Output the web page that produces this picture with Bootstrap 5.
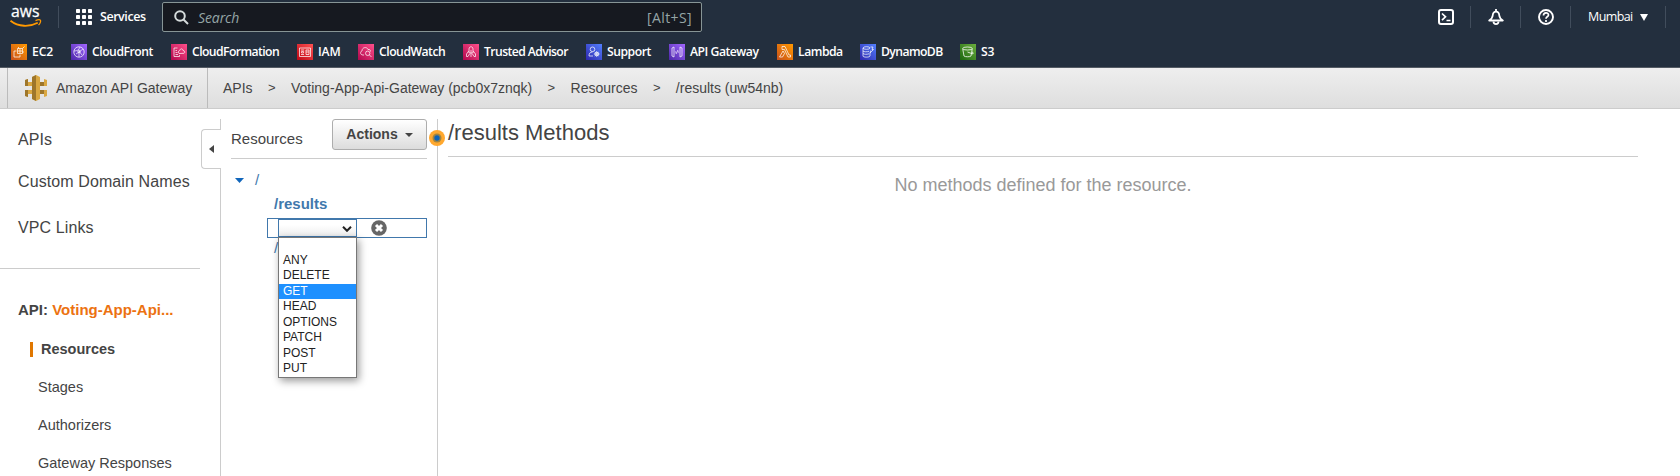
<!DOCTYPE html>
<html lang="en">
<head>
<meta charset="utf-8">
<title>API Gateway</title>
<link href="https://cdn.jsdelivr.net/npm/bootstrap@5.3.0/dist/css/bootstrap.min.css" rel="stylesheet">
<script src="https://cdn.jsdelivr.net/npm/bootstrap@5.3.0/dist/js/bootstrap.bundle.min.js"></script>
<style>
body{font-family:"Liberation Sans",Arial,sans-serif;color:#444;background:#fff;height:476px;overflow:hidden;font-size:14px}
a{color:inherit;text-decoration:none}
svg{display:block;flex:none}
.awsnav{background:#232f3e;height:68px;border-bottom:1px solid #545b64;font-family:"Open Sans","Noto Sans",sans-serif;color:#fff}
.toprow{height:34px}
.vsep{width:1px;height:22px;background:#414d5c;flex:none}
.logo{width:30px;height:28px;margin-left:10px}
.logosep{margin-left:18px}
.services{font-weight:600;font-size:12.5px;width:45px;margin-left:8px;letter-spacing:-.45px}
.searchbox{width:540px;height:30px;background:#161920;border:1px solid #879596;border-radius:2px;color:#95a5a6;margin-left:17px;padding:0 9px 0 11px;font-size:14px}
.searchbox i{margin-left:9px;letter-spacing:-.1px}
.searchbox span{letter-spacing:.4px}
.tools{margin-right:14px}
.tools>svg{margin:0 16px 0 17px}
.region{font-size:12.500px;letter-spacing:-.6px;font-weight:500;padding-left:17px;width:94px}
.region svg{margin-left:7px}
.favs{height:33px;padding:1px 0 0 11px}
.favs a{display:flex;align-items:center;flex:none;font-weight:600;font-size:12.200px;letter-spacing:-.48px;white-space:nowrap;line-height:16px;padding-top:1px}
.favs svg{margin-right:5px}
.favs a:nth-child(1){width:60px}.favs a:nth-child(2){width:100px}.favs a:nth-child(3){width:126px}
.favs a:nth-child(4){width:61px}.favs a:nth-child(5){width:105px}.favs a:nth-child(6){width:123px}
.favs a:nth-child(7){width:83px}.favs a:nth-child(8){width:108px}.favs a:nth-child(9){width:83px}.favs a:nth-child(10){width:100px}
.favs a:nth-child(1),.favs a:nth-child(4),.favs a:nth-child(11){letter-spacing:-.1px}
.favs a:nth-child(3),.favs a:nth-child(6),.favs a:nth-child(10){letter-spacing:-.58px}
.crumbs{height:41px;background:linear-gradient(#eee,#dedede);border-bottom:1px solid #ccc;padding-left:7px}
.brandcell{width:201px;border-left:1px solid #bbb;border-right:1px solid #bbb;padding-left:16px;height:40px}
.brandcell span{margin-left:8px}
.crumbtrail{padding-left:15px}
.crumbtrail b{font-weight:400;font-size:13px;margin:0 15.400px}
.workarea{height:367px}
.sidepane{width:221px;margin-top:10px;border-right:1px solid #ccc;height:357px;position:relative}
.toplinks{padding-top:11px}
.toplinks a{display:block;font-size:16px;line-height:20px;padding-left:18px;margin-bottom:22px;letter-spacing:.1px}
.toplinks a+a{margin-bottom:26px}
.toplinks a:last-child{margin-bottom:30px}
.sidehr{border-bottom:1px solid #ccc;width:200px;margin-bottom:31px}
.collapser{position:absolute;left:201px;top:10px;width:20px;height:40px;background:#fff;border:1px solid #ccc;border-right:0;border-radius:4px 0 0 4px;padding-left:7px}
.subnav{margin-top:19px}
.subnav a{display:block;font-size:14.5px;line-height:20px;height:38px;padding-left:38px}
.subnav a.current{font-weight:700;padding-left:30px}
.current::before{content:"";display:inline-block;width:3px;height:15px;background:#e07700;margin-right:8px;vertical-align:-3px}
.apiname{font-weight:700;font-size:15px;line-height:20px;padding-left:18px}
.orange{color:#ec7211}
.treepane{width:217px;margin-top:10px;border-right:1px solid #ccc;height:357px;padding:0 10px;position:relative}
.treehead{height:40px;border-bottom:1px solid #ccc;font-size:15px}
.treehead span{padding-top:9px}
.actbtn{width:95px;height:31px;border:1px solid #adadad;border-radius:3px;background:linear-gradient(#fff,#dcdcdc);font-weight:700;font-size:14px;line-height:20px;color:#444;padding:0 0 1px}
.actbtn svg{margin:1px 0 0 7px}
.grip{position:absolute;left:208.300px;top:11.300px;z-index:2}
.blue{color:#4178ac}
.treerow{font-size:15px;line-height:24px;height:24px}
.rootrow{margin-top:9px;padding-left:4px}
.rootrow span{margin-left:11px}
.indent{padding-left:43px}
.lastrow{line-height:19px}
.methodrow{width:160px;height:20px;border:1px solid #4178ac;margin:2px 0 0 36px;padding-left:10px}
.fakeselect{width:79px;height:18px;border:1px solid #4178ac;position:relative;background:linear-gradient(#fff 30%,#eee)}
.chev{margin:6px 0 0 63px}
.optlist{position:absolute;left:-1px;top:17px;width:79px;height:141px;background:#fff;border:1px solid #777;box-shadow:2px 3px 8px rgba(0,0,0,.4);color:#222;font-size:12px;line-height:15.43px;padding:15px 0 0;z-index:3;margin:0;list-style:none}
.optlist li{padding-left:4px;height:15.43px}
.optlist li.hit{background:#1e90ff;color:#fff}
.clearico{margin:.5px 0 0 14px}
.mainpane{padding:10px 42px 0 10px}
.mainpane h1{font-size:22px;line-height:28px;height:38px;border-bottom:1px solid #ccc;margin:0;font-weight:400}
.mainpane p{font-size:18px;line-height:24px;color:#999;margin:16px 0 0}
</style>
</head>
<body>
<svg width="0" height="0" class="position-absolute"><defs>
<linearGradient id="go" x1="0" y1="1" x2="1" y2="0"><stop stop-color="#c8511b"/><stop offset="1" stop-color="#f90"/></linearGradient>
<linearGradient id="gv" x1="0" y1="1" x2="1" y2="0"><stop stop-color="#4d27a8"/><stop offset="1" stop-color="#a166ff"/></linearGradient>
<linearGradient id="gp" x1="0" y1="1" x2="1" y2="0"><stop stop-color="#b0084d"/><stop offset="1" stop-color="#ff4f8b"/></linearGradient>
<linearGradient id="gr" x1="0" y1="1" x2="1" y2="0"><stop stop-color="#bd0816"/><stop offset="1" stop-color="#ff5252"/></linearGradient>
<linearGradient id="gb" x1="0" y1="1" x2="1" y2="0"><stop stop-color="#2e27ad"/><stop offset="1" stop-color="#527fff"/></linearGradient>
<linearGradient id="gg" x1="0" y1="1" x2="1" y2="0"><stop stop-color="#1b660f"/><stop offset="1" stop-color="#6cae3e"/></linearGradient>
</defs></svg>
<header class="awsnav">
  <div class="toprow d-flex align-items-center">
    <div class="logo"><svg width="32" height="28" viewBox="0 0 32 28" overflow="visible"><text x="1" y="14.300" font-family="Open Sans" font-size="17" fill="#fff" stroke="#fff" stroke-width=".3" textLength="28.500" lengthAdjust="spacingAndGlyphs">aws</text><path d="M.5 17.800c8 6.300 19 6.300 27.300 1.900" fill="none" stroke="#f90" stroke-width="1.800"/><path d="M25.500 17.700c2-.9 4.500-1 5-.4s-.3 3.300-2 4.800" fill="none" stroke="#f90" stroke-width="1.300"/></svg></div>
    <div class="vsep logosep"></div>
    <svg class="ms-3" width="17" height="16" fill="#fff"><g id="dots"><rect x="1" width="4" height="4" rx=".7"/><rect x="7" width="4" height="4" rx=".7"/><rect x="13" width="4" height="4" rx=".7"/></g><use href="#dots" y="6"/><use href="#dots" y="12"/></svg>
    <span class="services">Services</span>
    <div class="searchbox d-flex align-items-center"><svg width="15" height="15" fill="none" stroke="#d5dbdb" stroke-width="2"><circle cx="6" cy="6" r="4.800"/><path d="M9.500 9.500l4.500 4.500"/></svg><i>Search</i><span class="ms-auto">[Alt+S]</span></div>
    <div class="tools d-flex align-items-center ms-auto">
      <svg width="16" height="16" fill="none" stroke="#fff" stroke-width="2"><rect x="1" y="1" width="14" height="14" rx="2"/><path d="M4 4.500l3.500 3.300L4 11.200M8.500 11.500h4" stroke-width="1.700"/></svg><div class="vsep"></div>
      <svg width="16" height="16" fill="none" stroke="#fff" stroke-width="1.800"><path d="M1.200 11.500C3.200 10.200 4.500 9 4.700 6.500 4.900 3.700 6 2.600 8 2.600s3.100 1.100 3.300 3.900c.2 2.500 1.500 3.700 3.500 5z" stroke-linejoin="round"/><path d="M8 0v2.500M5.500 12.500c0 3.400 5 3.400 5 0"/></svg><div class="vsep"></div>
      <svg width="16" height="16" fill="none" stroke="#fff" stroke-width="1.900"><circle cx="8" cy="8" r="7"/><path d="M5.500 6.400c0-3.500 5-3.300 5-.4 0 1.900-2.500 1.700-2.500 3.700M8 11v2" stroke-width="1.700"/></svg><div class="vsep"></div>
      <span class="region d-flex align-items-center"><span>Mumbai</span><svg width="8" height="7" fill="#fff"><path d="M0 0h8L4 7z"/></svg></span><div class="vsep"></div>
    </div>
  </div>
  <nav class="favs d-flex align-items-center">
    <a href="#"><svg width="16" height="16" fill="none" stroke="#fff" stroke-opacity=".8"><rect width="16" height="16" fill="url(#go)" stroke="none"/><path d="M6.500 4.500h5v5h-5zM9 10.500v2.500H3V7h2.500M8 6h2v2H8zM11.500 4.500L13.500 2.500M7.500 4.500V3M13 8h-1.500" stroke-width=".9"/></svg>EC2</a>
    <a href="#"><svg width="16" height="16" fill="none" stroke="#fff" stroke-opacity=".8"><rect width="16" height="16" fill="url(#gv)" stroke="none"/><circle cx="8" cy="8" r="5.200" stroke-width=".9"/><path d="M3 7c3 0 5-1 6-4M8 7v6M8 8l4-3M8 7l3 4M8 8l-3 2" stroke-width=".8"/><circle cx="8" cy="7.500" r="1.300" stroke-width=".8"/></svg>CloudFront</a>
    <a href="#"><svg width="16" height="16" fill="none" stroke="#fff" stroke-opacity=".8"><rect width="16" height="16" fill="url(#gp)" stroke="none"/><path d="M6.500 4H3v8.500h5.500V11M4.500 6.500h1.500M4.500 8.500h2M4.500 10.500h2.500M8 9.500c-1.500-2 0-3 .8-3 .5-2.500 3-2 3.200 0 2.300 0 2 2.800.8 2.800z" stroke-width=".9"/></svg>CloudFormation</a>
    <a href="#"><svg width="16" height="16" fill="none" stroke="#fff" stroke-opacity=".8"><rect width="16" height="16" fill="url(#gr)" stroke="none"/><path d="M2.500 4h11v8.500h-11zM4 6h3M4 10.500h3M9 6h3v4.500H9zM4.500 7.500h2v1.500h-2zM9 8h3" stroke-width=".9"/></svg>IAM</a>
    <a href="#"><svg width="16" height="16" fill="none" stroke="#fff" stroke-opacity=".8"><rect width="16" height="16" fill="url(#gp)" stroke="none"/><path d="M6 11H5C2 11 2 7.500 4 7c0-4 5-4.500 6-1.500 1.700-.3 2.500.5 2.500 2M11.500 11l2 2" stroke-width=".9"/><circle cx="9.700" cy="9.300" r="2.200" stroke-width=".9"/></svg>CloudWatch</a>
    <a href="#"><svg width="16" height="16" fill="none" stroke="#fff" stroke-opacity=".8"><rect width="16" height="16" fill="url(#gp)" stroke="none"/><path d="M6 9V5c0-3 4-3 4 0v4zM8 6v7M5.800 7L3.500 10v2.500H5L6.500 10M10.200 7l2.300 3v2.500H11L9.500 10" stroke-width=".9"/></svg>Trusted Advisor</a>
    <a href="#"><svg width="16" height="16" fill="none" stroke="#fff" stroke-opacity=".8"><rect width="16" height="16" fill="url(#gb)" stroke="none"/><circle cx="6.500" cy="5.300" r="2.300" stroke-width=".9"/><path d="M7 12H3c0-2.500 1-4 3.500-4" stroke-width=".9"/><circle cx="10.700" cy="10" r="1.800"/><path d="M10.700 7v6M7.800 10h6M8.600 8l4.200 4M12.800 8l-4.200 4" stroke-width=".7"/></svg>Support</a>
    <a href="#"><svg width="16" height="16" fill="none" stroke="#fff" stroke-opacity=".8"><rect width="16" height="16" fill="url(#gv)" stroke="none"/><path d="M5 3L3 4v8l2 1zM11 3l2 1v8l-2 1zM9 6L7 10M6.500 7.500L6 8l.5.500M9.500 7.500l.5.500-.5.500" stroke-width=".9"/></svg>API Gateway</a>
    <a href="#"><svg width="16" height="16" fill="none" stroke="#fff" stroke-opacity=".8"><rect width="16" height="16" fill="url(#go)" stroke="none"/><path d="M5 2.500h3l4 8.500h1.500v2H11L7.500 5.500H5zM6 7l1.500 2.500L5.500 13h-3z" stroke-width=".9"/></svg>Lambda</a>
    <a href="#"><svg width="16" height="16" fill="none" stroke="#fff" stroke-opacity=".8"><rect width="16" height="16" fill="url(#gb)" stroke="none"/><ellipse cx="6.500" cy="4" rx="3.500" ry="1.300" stroke-width=".9"/><path d="M3 4v8c0 1.500 6.500 1.500 7 0V9M3 7c1 1 4 1 6 .3M3 9.500c1 1 4 1 6 .3M10.500 3h2.500l-1 2.500h1.500L10 9l.7-2.500" stroke-width=".9"/></svg>DynamoDB</a>
    <a href="#"><svg width="16" height="16" fill="none" stroke="#fff" stroke-opacity=".85"><rect width="16" height="16" fill="url(#gg)" stroke="none"/><ellipse cx="7.500" cy="4.500" rx="4.800" ry="1.500" stroke-width=".9"/><path d="M2.700 4.500L4 12c1 1 6 1 7 0l1.300-7.500M7.500 8l5.500 2v-1.500L12 8" stroke-width=".9"/></svg>S3</a>
  </nav>
</header>
<div class="crumbs d-flex align-items-center">
  <div class="brandcell d-flex align-items-center"><svg width="24" height="26" viewBox="0 0 24 26"><path d="M1 5l3-1v3h4V2l4-2 4 2v5h4V4l3 1v6h-7v4h7v6l-3 1v-3h-4v5l-4 2-4-2v-5H4v3l-3-1v-6h7v-4H1z" fill="#d9a741"/><path d="M1 5l3-1v7H1zM1 15h3v7l-3-1zM8 2l4-2v26l-4-2zM16 7h4v4h-4zM16 15h4v4h-4z" fill="#8f6a24" opacity=".8"/></svg><span>Amazon API Gateway</span></div>
  <div class="crumbtrail d-flex align-items-center"><a href="#">APIs</a><b>&gt;</b><a href="#">Voting-App-Api-Gateway (pcb0x7znqk)</a><b>&gt;</b><a href="#">Resources</a><b>&gt;</b><span>/results (uw54nb)</span></div>
</div>
<div class="workarea d-flex">
  <aside class="sidepane flex-shrink-0">
    <nav class="toplinks d-flex flex-column">
      <a href="#">APIs</a><a href="#">Custom Domain Names</a><a href="#">VPC Links</a>
    </nav>
    <div class="sidehr"></div>
    <div class="apiname">API: <span class="orange">Voting-App-Api...</span></div>
    <nav class="subnav"><a class="current" href="#">Resources</a><a href="#">Stages</a><a href="#">Authorizers</a><a href="#">Gateway Responses</a></nav>
    <div class="collapser d-flex align-items-center"><svg width="5" height="8" fill="#444"><path d="M5 0v8L0 4z"/></svg></div>
  </aside>
  <section class="treepane flex-shrink-0">
    <div class="treehead d-flex justify-content-between align-items-start"><span>Resources</span>
      <button class="actbtn d-flex align-items-center justify-content-center">Actions<svg width="8" height="4" fill="#444"><path d="M0 0h8L4 4z"/></svg></button></div>
    <svg class="grip" width="16" height="16"><circle cx="8" cy="8" r="8" fill="#ffa82e"/><circle cx="8" cy="8" r="4.500" fill="#a08442"/><circle cx="8" cy="8" r="2.700" fill="#0d63b8"/></svg>
    <div class="treerow rootrow d-flex align-items-center"><svg width="9" height="5" fill="#1166bb"><path d="M0 0h9L4.500 5z"/></svg><span class="blue">/</span></div>
    <div class="treerow blue fw-bold indent">/results</div>
    <div class="methodrow d-flex"><div class="fakeselect"><svg class="chev" width="10" height="6" fill="none" stroke="#222" stroke-width="2"><path d="M1 .8l4 4 4-4"/></svg>
      <ul class="optlist"><li>ANY</li><li>DELETE</li><li class="hit">GET</li><li>HEAD</li><li>OPTIONS</li><li>PATCH</li><li>POST</li><li>PUT</li></ul></div>
      <svg class="clearico" width="16" height="16"><circle cx="8" cy="8" r="7.800" fill="#666"/><path d="M5 5l6 6M11 5l-6 6" stroke="#fff" stroke-width="3"/></svg></div>
    <div class="treerow lastrow blue indent">/</div>
  </section>
  <main class="mainpane flex-grow-1">
    <h1>/results Methods</h1>
    <p class="text-center">No methods defined for the resource.</p>
  </main>
</div>
</body>
</html>
